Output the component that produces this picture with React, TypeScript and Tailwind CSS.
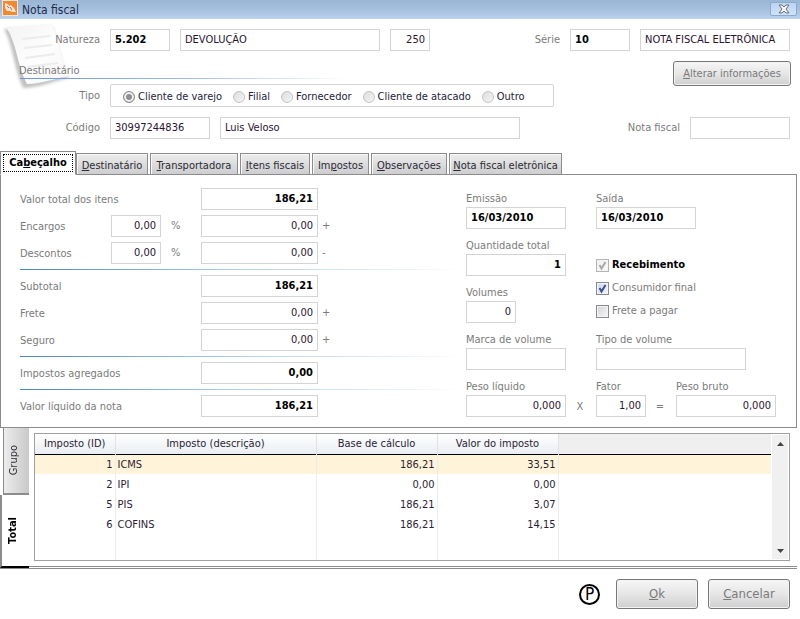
import { useState } from "react";
import type { ReactNode } from "react";

const FIELD =
  "h-[22px] border border-[#d4d4d4] bg-white px-[4px] pb-[2px] text-[11px] outline-none";

type BoxProps = {
  id: string;
  label?: string;
  value?: string;
  width: string;
  bold?: boolean;
  right?: boolean;
};

function Box({ id, label, value = "", width, bold, right }: BoxProps) {
  return (
    <input
      id={id}
      type="text"
      aria-label={label}
      defaultValue={value}
      className={`${FIELD} ${width} ${bold ? "font-bold text-black" : "text-[#2a1430]"} ${
        right ? "text-right" : "text-left"
      }`}
    />
  );
}

function Stacked({ id, label, ...rest }: BoxProps & { label: string }) {
  return (
    <div className="flex flex-col items-start gap-px">
      <label htmlFor={id} className="leading-[14px]">
        {label}
      </label>
      <Box id={id} {...rest} />
    </div>
  );
}

function Rule() {
  return <div className="h-px bg-linear-to-r from-[#4a84c4] via-[#b4cfe8] via-50% to-white" />;
}

function AmountRow({
  id,
  label,
  value,
  bold,
  percent,
  sign,
}: {
  id: string;
  label: string;
  value: string;
  bold?: boolean;
  percent?: string;
  sign?: string;
}) {
  return (
    <div className="flex items-center">
      <label htmlFor={id} className={percent ? "w-[91px] pt-px" : "w-[181px] pt-px"}>
        {label}
      </label>
      {percent && (
        <div className="flex w-[90px] items-center gap-[10px]">
          <Box id={`${id}-pct`} label={`${label} %`} value={percent} width="w-[50px]" right />
          <span>%</span>
        </div>
      )}
      <Box id={id} value={value} bold={bold} width="w-[117px]" right />
      {sign && <span className="ml-[4px]">{sign}</span>}
    </div>
  );
}

function Check({
  id,
  children,
  checked,
  disabled,
  bold,
}: {
  id: string;
  children: ReactNode;
  checked?: boolean;
  disabled?: boolean;
  bold?: boolean;
}) {
  return (
    <div className="flex h-[16px] items-center gap-[3px]">
      <span className="relative size-[13px]">
        <input
          id={id}
          type="checkbox"
          defaultChecked={checked}
          disabled={disabled}
          className="peer block size-[13px] appearance-none border border-[#8a8a92] bg-linear-to-br from-[#d2d2d2] to-[#fafafa] shadow-[inset_0_0_0_1px_#f4f4f4] checked:from-[#cdd6f0] checked:to-[#f4f6ff] disabled:border-[#b4b4b4] disabled:from-[#f0f0f0] disabled:to-[#fafafa]"
        />
        <svg
          viewBox="0 0 13 13"
          fill="none"
          strokeWidth="2"
          className="pointer-events-none absolute inset-0 hidden size-[13px] stroke-[#3c4f94] peer-checked:block peer-disabled:stroke-[#a8a8a8]"
        >
          <path d="M3.5 6 L5.5 9.5 L9.5 3" />
        </svg>
      </span>
      <label htmlFor={id} className={bold ? "font-bold text-black" : ""}>
        {children}
      </label>
    </div>
  );
}

const KINDS = ["Cliente de varejo", "Filial", "Fornecedor", "Cliente de atacado", "Outro"];

const TABS: [string, string, string, string][] = [
  ["Ca", "b", "eçalho", "w-[76px]"],
  ["", "D", "estinatário", "w-[72px]"],
  ["", "T", "ransportadora", "w-[88px]"],
  ["", "I", "tens fiscais", "w-[70px]"],
  ["Im", "p", "ostos", "w-[57px]"],
  ["", "O", "bservações", "w-[76px]"],
  ["", "N", "ota fiscal eletrônica", "w-[113px]"],
];

const TAXES = [
  ["1", "ICMS", "186,21", "33,51"],
  ["2", "IPI", "0,00", "0,00"],
  ["5", "PIS", "186,21", "3,07"],
  ["6", "COFINS", "186,21", "14,15"],
];

const BUTTON =
  "rounded-[3px] border border-[#777] bg-linear-to-b from-[#f6f6f6] via-[#e6e6e6] to-[#cfcfcf] text-[#7a7a7a] shadow-[inset_0_0_0_1px_#f3f3f3]";

function PaperIcon() {
  return (
    <svg
      viewBox="0 0 76 76"
      className="pointer-events-none absolute top-[2px] left-0 size-[76px]"
      aria-hidden="true"
    >
      <defs>
        <linearGradient id="paper" x1="0" y1="0" x2="1" y2="1">
          <stop offset="0" stopColor="#f3f3f3" />
          <stop offset="0.5" stopColor="#fdfdfd" />
          <stop offset="1" stopColor="#f6f6f6" />
        </linearGradient>
        <filter id="soft" x="-20%" y="-20%" width="140%" height="140%">
          <feGaussianBlur stdDeviation="1.5" />
        </filter>
      </defs>
      <path
        d="M4 8 C13 24 14 48 23 67 C38 67 54 60 69 57 C60 42 58 20 52 5 Z"
        fill="#c2c2c2"
        filter="url(#soft)"
      />
      <path
        d="M6 6 C17 22 17 45 27 63 C42 63 55 57 70 55 C60 40 59 18 52 3 Z"
        fill="url(#paper)"
      />
      <path
        d="M22 18 L50 15 M24 27 L52 24 M25 37 L55 33 M27 46 L58 42"
        stroke="#ececec"
        strokeWidth="2"
      />
    </svg>
  );
}

export default function App() {
  const [kind, setKind] = useState(KINDS[0]);

  return (
    <div className="min-h-screen bg-white font-['DejaVu_Sans_Condensed','DejaVu_Sans',sans-serif] text-[11px] leading-[14px] text-[#7b7b7b]">
      <header className="flex h-[19px] items-center bg-linear-to-b from-[#9bb6d5] via-[#a5c0de] to-[#bcd2f1] pr-[3px] pl-[2px]">
        <svg viewBox="0 0 16 16" className="size-[16px] self-start" aria-hidden="true">
          <rect x="0.5" y="0.5" width="15" height="15" fill="#ee8a35" stroke="#fbe6d4" />
          <path d="M3 3 L6 4 L7 6 L9 5 L12 8 L14 12 H11 L8 11 L5 11 L3 8 Z" fill="#fbe3cd" />
          <path d="M5 6 L7 8 M8 7 L10 10" stroke="#a3727c" strokeWidth="1" />
        </svg>
        <h1 className="ml-[4px] pt-px text-[12px] text-[#1d2b45]">Nota fiscal</h1>
        <button
          type="button"
          aria-label="Fechar"
          className="ml-auto mt-[2px] flex h-[14px] w-[27px] items-center justify-center self-start rounded-[2px] border border-[#8ca9cf] bg-linear-to-b from-[#bdd5f0] to-[#cfe2fa]"
        >
          <svg viewBox="0 0 12 10" className="h-[10px] w-[12px]" fill="none">
            <path
              d="M1 1 H4 L6 3 L8 1 H11 L8 5 L11 9 H8 L6 7 L4 9 H1 L4 5 Z"
              fill="#f4f6f8"
              stroke="#6a7078"
              strokeWidth="1"
            />
          </svg>
        </button>
      </header>

      <section className="relative pt-[10px] pr-[10px]">
        <PaperIcon />
        <div className="relative flex items-center gap-[10px]">
          <label htmlFor="natureza" className="w-[100px] text-right">
            Natureza
          </label>
          <Box id="natureza" value="5.202" bold width="w-[60px]" />
          <Box id="natureza-nome" label="Descrição" value="DEVOLUÇÃO" width="w-[200px]" />
          <Box id="natureza-cod" label="Operação" value="250" right width="w-[40px]" />
          <label htmlFor="serie" className="ml-auto">
            Série
          </label>
          <Box id="serie" value="10" bold width="w-[60px]" />
          <Box id="serie-nome" label="Modelo" value="NOTA FISCAL ELETRÔNICA" width="w-[150px]" />
        </div>

        <div className="relative flex items-start">
          <div className="flex-1 pt-[13px]">
            <h2 className="pl-[19px]">Destinatário</h2>
            <div className="mb-[5px] pl-[20px]">
              <div className="h-px w-1/2 bg-linear-to-r from-[#6a94e0] via-[#9dbbe6] to-white" />
            </div>
            <div className="flex items-center gap-[10px]">
              <span id="tipo" className="w-[100px] text-right">
                Tipo
              </span>
              <div
                role="radiogroup"
                aria-labelledby="tipo"
                className="flex h-[23px] w-[444px] items-center gap-[11px] rounded-[2px] border border-[#d4d4d4] bg-white pt-[2px] pl-[12px] text-[#23233a]"
              >
                {KINDS.map((k) => (
                  <label key={k} className="flex items-center gap-[3px] whitespace-nowrap">
                    <input
                      type="radio"
                      name="tipo"
                      checked={kind === k}
                      onChange={() => setKind(k)}
                      className="size-[12px] appearance-none rounded-full border border-[#c4c4c4] bg-linear-to-br from-[#dcdcdc] to-[#f6f6f6] checked:border-[#8f8f8f] checked:bg-[#8f8f8f] checked:bg-none checked:shadow-[inset_0_0_0_2px_#f2f2f2]"
                    />
                    {k}
                  </label>
                ))}
              </div>
            </div>
          </div>
          <button type="button" className={`${BUTTON} mt-[10px] -mr-px h-[25px] w-[118px] text-[11px]`}>
            <u>A</u>lterar informações
          </button>
        </div>

        <div className="mt-[10px] flex items-center gap-[10px]">
          <label htmlFor="codigo" className="w-[100px] text-right">
            Código
          </label>
          <Box id="codigo" value="30997244836" width="w-[100px]" />
          <Box id="cliente" label="Cliente" value="Luis Veloso" width="w-[300px]" />
          <label htmlFor="nota" className="ml-auto">
            Nota fiscal
          </label>
          <Box id="nota" width="w-[100px]" />
        </div>
      </section>

      <main className="mt-[12px] mr-[3px]">
        <div role="tablist" className="flex h-[24px] items-end gap-[2px]">
          {TABS.map(([pre, key, post, width], i) => (
            <button
              key={post}
              type="button"
              role="tab"
              aria-selected={i === 0}
              className={`${width} whitespace-nowrap border border-[#8c8c8c] ${
                i === 0
                  ? "relative -mr-[2px] h-[24px] border-b-white bg-white p-[2px] font-bold text-black"
                  : "h-[22px] bg-linear-to-b from-[#ededed] to-[#cdcdd0] pt-[3px] text-[#2b2b33] shadow-[inset_1px_1px_0_#f8f8f8]"
              }`}
            >
              <span
                className={
                  i === 0 ? "flex h-full items-center justify-center border border-dotted border-black" : ""
                }
              >
                <span>
                  {pre}
                  <u>{key}</u>
                  {post}
                </span>
              </span>
            </button>
          ))}
        </div>

        <div className="-mt-px flex border border-[#8c8c8c] pt-[13px] pb-[10px] pl-[19px]">
          <div className="flex flex-1 flex-col gap-[5px]">
            <AmountRow id="itens" label="Valor total dos itens" value="186,21" bold />
            <AmountRow id="encargos" label="Encargos" value="0,00" percent="0,00" sign="+" />
            <AmountRow id="descontos" label="Descontos" value="0,00" percent="0,00" sign="-" />
            <Rule />
            <AmountRow id="subtotal" label="Subtotal" value="186,21" bold />
            <AmountRow id="frete" label="Frete" value="0,00" sign="+" />
            <AmountRow id="seguro" label="Seguro" value="0,00" sign="+" />
            <Rule />
            <AmountRow id="agregados" label="Impostos agregados" value="0,00" bold />
            <Rule />
            <AmountRow id="liquido" label="Valor líquido da nota" value="186,21" bold />
          </div>

          <div className="flex w-[330px] flex-col gap-[10px] pt-[4px]">
            <div className="flex gap-[30px]">
              <Stacked id="emissao" label="Emissão" value="16/03/2010" bold width="w-[100px]" />
              <Stacked id="saida" label="Saída" value="16/03/2010" bold width="w-[100px]" />
            </div>
            <div className="flex gap-[30px]">
              <div className="flex flex-col gap-[10px]">
                <Stacked id="qtd" label="Quantidade total" value="1" bold right width="w-[100px]" />
                <Stacked id="volumes" label="Volumes" value="0" right width="w-[50px]" />
              </div>
              <div className="flex flex-col gap-[7px] pt-[18px]">
                <Check id="recebimento" checked disabled bold>
                  Recebimento
                </Check>
                <Check id="consumidor" checked>
                  Consumidor final
                </Check>
                <Check id="frete-pagar">Frete a pagar</Check>
              </div>
            </div>
            <div className="flex gap-[30px]">
              <Stacked id="marca" label="Marca de volume" width="w-[100px]" />
              <Stacked id="tipo-volume" label="Tipo de volume" width="w-[150px]" />
            </div>
            <div className="flex items-end">
              <Stacked id="peso-liq" label="Peso líquido" value="0,000" right width="w-[100px]" />
              <span className="w-[28px] pb-[3px] text-center">X</span>
              <span className="w-[2px]" />
              <Stacked id="fator" label="Fator" value="1,00" right width="w-[50px]" />
              <span className="w-[28px] pb-[3px] text-center">=</span>
              <span className="w-[2px]" />
              <Stacked id="peso-bruto" label="Peso bruto" value="0,000" right width="w-[100px]" />
            </div>
          </div>
        </div>

        <div className="flex border-b border-[#8c8c8c]">
          <div role="tablist" aria-orientation="vertical" className="flex w-[29px] flex-col">
            <button
              type="button"
              role="tab"
              aria-selected={false}
              className="ml-[3px] flex h-[67px] items-center justify-center border-b-2 border-l border-[#8c8c8c] bg-linear-to-r from-[#ececec] to-[#c9c9cb] pr-[6px] text-[#2b2b33]"
            >
              <span className="rotate-180 [writing-mode:vertical-rl]">Grupo</span>
            </button>
            <button
              type="button"
              role="tab"
              aria-selected
              className="flex flex-1 items-center justify-center border-b-2 border-l-2 border-b-black border-l-[#8c8c8c] pr-[6px] font-bold text-black"
            >
              <span className="rotate-180 [writing-mode:vertical-rl]">Total</span>
            </button>
          </div>

          <div className="mb-px flex-1 border-b border-[#8c8c8c] pt-[5px] pr-[7px] pb-[5px] pl-[5px]">
            <div className="flex border border-[#a0a0a0]">
              <table className="w-full flex-1 table-fixed border-collapse text-[#2b1d35]">
                <colgroup>
                  <col className="w-[80px]" />
                  <col className="w-[201px]" />
                  <col className="w-[121px]" />
                  <col className="w-[121px]" />
                  <col />
                </colgroup>
                <thead>
                  <tr className="h-[20px] border-b border-black bg-[#efefef]">
                    {["Imposto (ID)", "Imposto (descrição)", "Base de cálculo", "Valor do imposto"].map((h) => (
                      <th
                        key={h}
                        scope="col"
                        className="border-r border-r-[#e2e2e2] bg-linear-to-b from-white to-[#e9edf2] p-0 font-normal"
                      >
                        {h}
                      </th>
                    ))}
                    <td className="p-0" />
                  </tr>
                </thead>
                <tbody>
                  {TAXES.map(([id, name, base, amount], i) => (
                    <tr key={id} className={`h-[20px] ${i === 0 ? "bg-[#fff4d9]" : ""}`}>
                      <td className="border-r border-[#ececec] p-0 pt-px pr-[2px] text-right">{id}</td>
                      <td className="border-r border-[#ececec] p-0 pt-px pl-[2px]">{name}</td>
                      <td className="border-r border-[#ececec] p-0 pt-px pr-[2px] text-right">{base}</td>
                      <td className="border-r border-[#ececec] p-0 pt-px pr-[2px] text-right">{amount}</td>
                      <td className="p-0" />
                    </tr>
                  ))}
                  <tr className="h-[26px]">
                    <td className="border-r border-[#ececec]" />
                    <td className="border-r border-[#ececec]" />
                    <td className="border-r border-[#ececec]" />
                    <td className="border-r border-[#ececec]" />
                    <td />
                  </tr>
                </tbody>
              </table>
              <div className="flex w-[18px] flex-col justify-between border border-white bg-[#f0f0f0]">
                <button type="button" aria-label="Subir" className="flex h-[17px] items-center justify-center">
                  <svg viewBox="0 0 7 4" className="h-[4px] w-[7px]" fill="#444">
                    <path d="M0 4 L3.5 0 L7 4 Z" />
                  </svg>
                </button>
                <button type="button" aria-label="Descer" className="flex h-[17px] items-center justify-center">
                  <svg viewBox="0 0 7 4" className="h-[4px] w-[7px]" fill="#444">
                    <path d="M0 0 L3.5 4 L7 0 Z" />
                  </svg>
                </button>
              </div>
            </div>
          </div>
        </div>
      </main>

      <footer className="flex items-center justify-end gap-[10px] py-[10px] pr-[10px] text-[13px]">
        <button
          type="button"
          className="mr-[6px] flex size-[21px] items-center justify-center rounded-full border-2 border-black text-[17px] leading-[17px] text-black"
        >
          P
        </button>
        <button type="button" className={`${BUTTON} h-[30px] w-[82px]`}>
          <u>O</u>k
        </button>
        <button type="button" className={`${BUTTON} h-[30px] w-[82px]`}>
          <u>C</u>ancelar
        </button>
      </footer>
    </div>
  );
}
